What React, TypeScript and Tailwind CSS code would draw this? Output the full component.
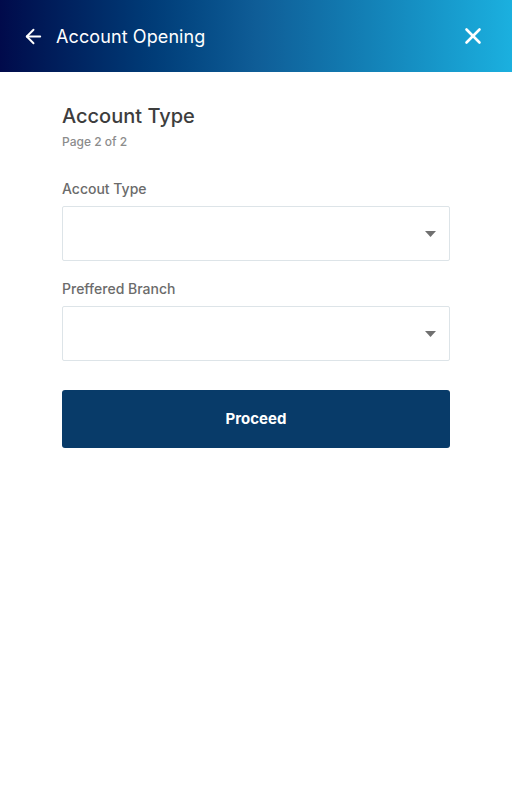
import { ArrowLeft, X } from 'lucide-react';

function SelectField({ label }: { label: string }) {
  return (
    <div>
      <p className="text-[14px] leading-[18px] font-medium text-[#6b6b6b] mb-[8px]">{label}</p>
      <div className="h-[55px] border border-[#dde4e8] rounded-[2px] flex items-center justify-end pr-[13px]">
        <svg width="11" height="6" viewBox="0 0 11 6">
          <path d="M0 0h11L5.5 6z" fill="#707070" />
        </svg>
      </div>
    </div>
  );
}

export default function App() {
  return (
    <div className="w-[512px] h-[794px] bg-white" style={{ fontFamily: 'Inter, "Noto Sans", sans-serif' }}>
      {/* Header */}
      <div className="h-[72px] flex items-center justify-between pl-[22px] pr-[26px] bg-gradient-to-r from-[#010a4b] via-[#0f5d97] to-[#1bb0df]">
        <div className="flex items-center gap-[11px]">
          <ArrowLeft size={23} strokeWidth={2} className="text-white" />
          <span className="text-white text-[18px] font-normal tracking-[0.1px]">Account Opening</span>
        </div>
        <X size={26} strokeWidth={2.4} className="text-white" />
      </div>

      {/* Form */}
      <div className="px-[62px] pt-[31px]">
        <h1 className="text-[20px] leading-[26px] font-medium text-[#3d3d3d]">Account Type</h1>
        <p className="text-[12px] leading-[16px] font-medium text-[#8c8c8c] mt-[5px]">Page 2 of 2</p>

        <div className="mt-[30px] flex flex-col gap-[19px]">
          <SelectField label="Accout Type" />
          <SelectField label="Preffered Branch" />
        </div>

        <button className="mt-[29px] w-full h-[58px] bg-[#083b69] rounded-[3px] text-white text-[15px] font-bold">
          Proceed
        </button>
      </div>
    </div>
  );
}
